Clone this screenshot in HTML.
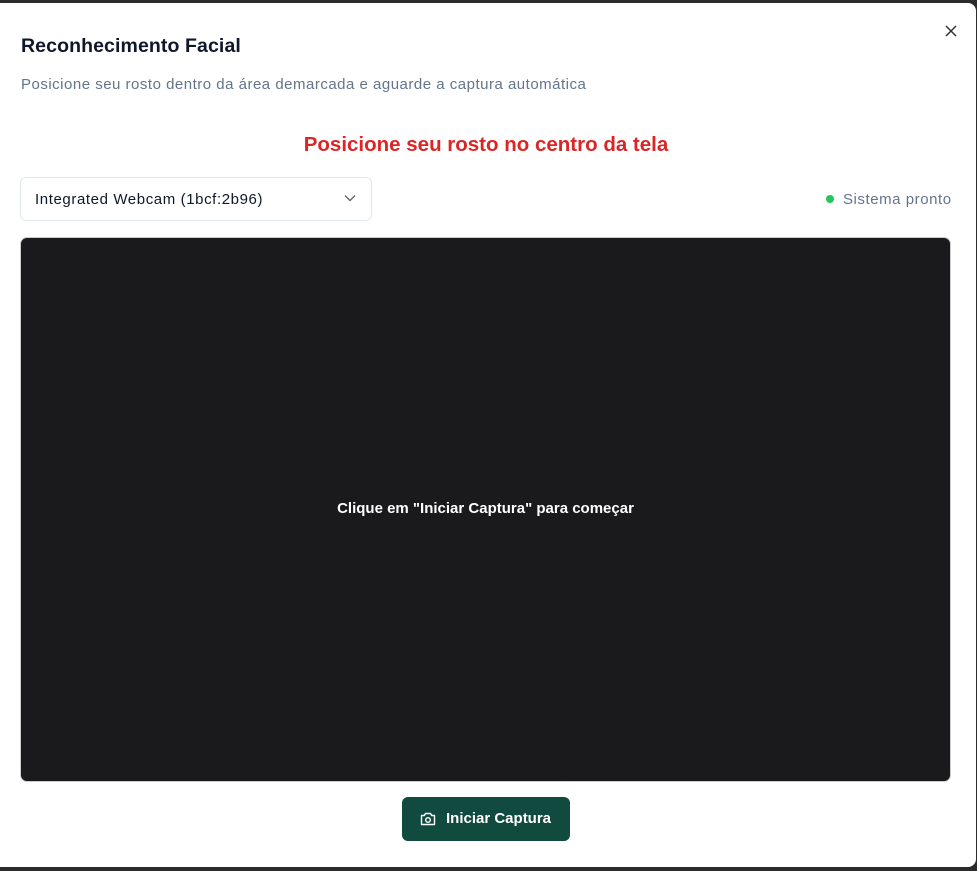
<!DOCTYPE html>
<html><head><meta charset="utf-8"><style>
*{margin:0;padding:0;box-sizing:border-box}
body{width:977px;height:871px;background:#2b2b2b;font-family:"Liberation Sans",sans-serif;position:relative;overflow:hidden}
.m{position:absolute;left:0;top:3px;width:976px;height:864px;background:#fff;border-radius:0 8px 8px 0}
.t{position:absolute;left:21px;top:32px;font-size:19.5px;font-weight:bold;color:#0f172a;letter-spacing:0.1px}
.s{position:absolute;left:21px;top:73px;font-size:15px;color:#64748b;letter-spacing:0.5px}
.x{position:absolute;left:944px;top:21px}
.r{position:absolute;left:0;width:972px;top:130px;text-align:center;font-size:20.5px;font-weight:bold;color:#dc2626}
.sel{position:absolute;left:20px;top:174px;width:352px;height:44px;border:1px solid #e2e8f0;border-radius:6px;font-size:15px;color:#0f172a;padding:13px 14px;letter-spacing:0.6px}
.sel svg{position:absolute;right:15px;top:16px}
.st{position:absolute;left:826px;top:188px;font-size:15px;color:#64748b;letter-spacing:0.55px}
.st i{display:inline-block;width:8px;height:8px;border-radius:50%;background:#22c55e;margin-right:9px;vertical-align:1px}
.v{position:absolute;left:20px;top:234px;width:931px;height:545px;background:#1a1a1c;border-radius:7px;border:1px solid #ccc}
.v p{position:absolute;width:100%;top:262px;text-align:center;color:#fff;font-size:15px;font-weight:bold}
.b{position:absolute;left:402px;top:794px;width:168px;height:44px;background:#114b3f;border-radius:6px;color:#fff;font-size:15px;font-weight:bold;padding:13px 0 0 44px}
.b svg{position:absolute;left:18px;top:15px}
</style></head><body>
<div class="m">
<div class="t">Reconhecimento Facial</div>
<div class="s">Posicione seu rosto dentro da área demarcada e aguarde a captura automática</div>
<svg class="x" width="14" height="14" viewBox="0 0 14 14"><path d="M2 2L12 12M12 2L2 12" stroke="#333" stroke-width="1.5"/></svg>
<div class="r">Posicione seu rosto no centro da tela</div>
<div class="sel">Integrated Webcam (1bcf:2b96)<svg width="12" height="8" viewBox="0 0 12 8"><path d="M1 1.5L6 6.5L11 1.5" stroke="#666" stroke-width="1.4" fill="none"/></svg></div>
<div class="st"><i></i>Sistema pronto</div>
<div class="v"><p>Clique em "Iniciar Captura" para começar</p></div>
<div class="b"><svg width="16" height="14" viewBox="0 0 16 14"><path d="M5.5 1.5h5l1.2 2H14.5v9h-13v-9h2.8z" stroke="#fff" stroke-width="1.4" fill="none" stroke-linejoin="round"/><circle cx="8" cy="8" r="2.3" stroke="#fff" stroke-width="1.4" fill="none"/></svg>Iniciar Captura</div>
</div>
</body></html>
